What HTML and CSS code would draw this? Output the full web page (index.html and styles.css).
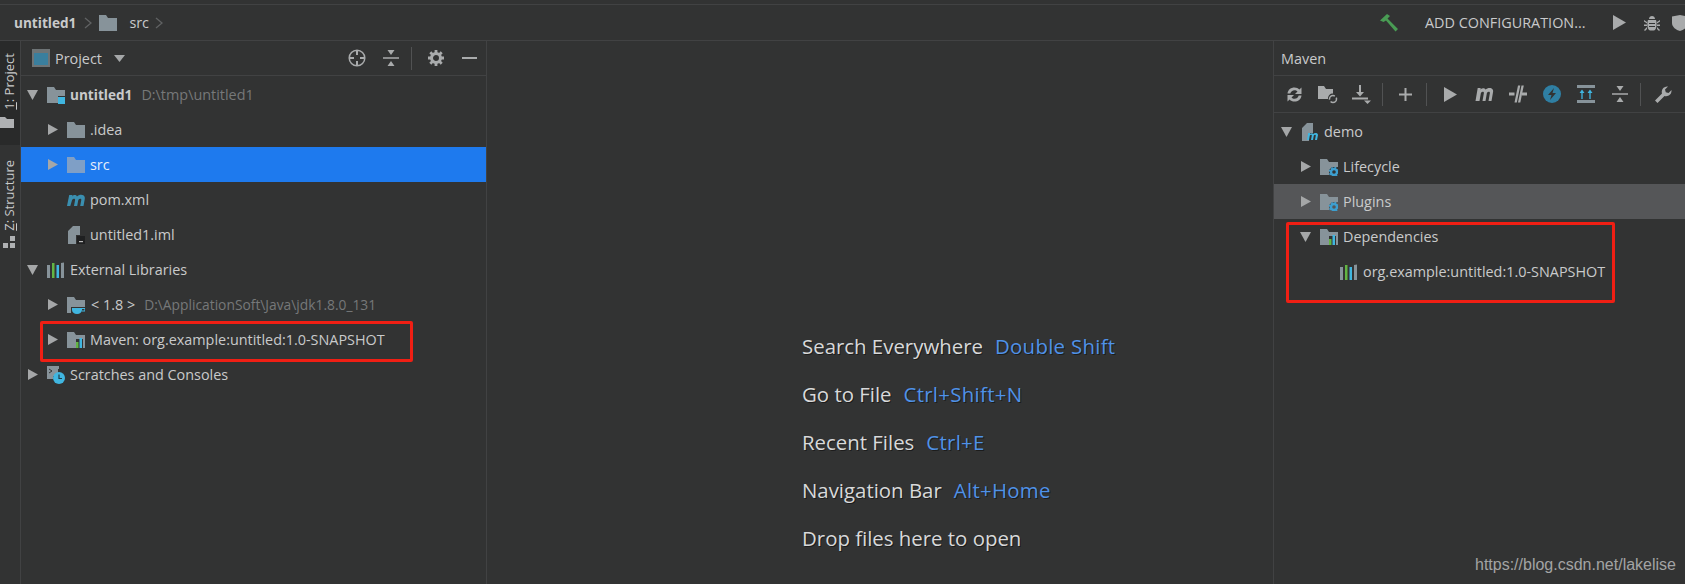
FILE: index.html
```html
<!DOCTYPE html>
<html lang="en">
<head>
    <meta charset="UTF-8">
    <title>untitled1 - IntelliJ IDEA</title>
    <link rel="stylesheet" href="styles.css">
</head>
<body>
    <svg class="defs" width="0" height="0">
        <symbol id="folder" viewBox="0 0 18 18"><path d="M0 1h7l2 3h9v13H0z" fill="#87939a"/></symbol>
        <symbol id="libs" viewBox="0 0 18 18"><path d="M0 4h3v13H0z" fill="#87939a"/><path d="M5 2h2.500v15H5z" fill="#62b543"/><path d="M9.500 4H12v13H9.500z" fill="#40b6e0"/><path d="M14 2l3-.5V17h-3z" fill="#87939a"/></symbol>
        <symbol id="folderlibs" viewBox="0 0 18 18"><path d="M0 1h7l2 3h9v4h-9v9H0z" fill="#87939a"/><path d="M9 11h2.500v6H9z" fill="#62b543"/><path d="M12.500 7H15v10h-2.500z" fill="#40b6e0"/><path d="M16 8h2v9h-2z" fill="#87939a"/></symbol>
        <symbol id="foldergear" viewBox="0 0 18 18"><path d="M0 1h7l2 3h9v5h-6l-3 3v5H0z" fill="#87939a"/><circle cx="14" cy="14" r="3" fill="none" stroke="#3d9fd0" stroke-width="2.400"/><circle cx="14" cy="14" r="4.500" fill="none" stroke="#3d9fd0" stroke-width="1.600" stroke-dasharray="1.800 1.730"/></symbol>
        <symbol id="triright" viewBox="0 0 11 11"><path d="M1 0l10 5.500L1 11z" fill="#a5a7a8"/></symbol>
        <symbol id="tridown" viewBox="0 0 11 11"><path d="M0 1h11L5.500 11z" fill="#a5a7a8"/></symbol>
        <symbol id="collapse" viewBox="0 0 16 16"><path d="M0 7.200h16v1.600H0zM4.500 0h7L8 5zM4.500 16h7L8 11z" fill="#a9abac"/></symbol>
        <symbol id="play" viewBox="0 0 13 15"><path d="M0 0l13 7.500L0 15z" fill="#a9abac"/></symbol>
    </svg>

    <div class="navbar">
        <div class="crumbs">
            <b>untitled1</b>
            <svg class="chev" width="8" height="12" viewBox="0 0 8 12"><path d="M1 1l6 5-6 5" fill="none" stroke="#606263" stroke-width="1.300"/></svg>
            <svg class="ico" width="18" height="18"><use href="#folder"/></svg>
            <span>src</span>
            <svg class="chev" width="8" height="12" viewBox="0 0 8 12"><path d="M1 1l6 5-6 5" fill="none" stroke="#606263" stroke-width="1.300"/></svg>
        </div>
        <div class="runbar">
            <svg class="hammer" width="20" height="18" viewBox="0 0 20 18"><path d="M0 6.500L7 0l3 2-2.500 2.500L18 15l-2.500 2.500L6 6.500 3.500 8z" fill="#499c54"/></svg>
            <span class="config">ADD CONFIGURATION...</span>
            <svg width="13" height="15"><use href="#play"/></svg>
            <svg class="bug" width="16" height="16" viewBox="0 0 16 16"><path d="M5 4c0-4 6-4 6 0zM4 5h8c1 2 1 8-1 10-1 .7-5 .7-6 0C3 13 3 7 4 5zM0 5l3 2v1.500L0 6.500zM16 5l-3 2v1.500l3-2zM0 9.500h3V11H0zM13 9.500h3V11h-3zM0 15l3-3v2l-2 2zM16 15l-3-3v2l2 2z" fill="#a9abac"/><path d="M5 8.500h6M5 11.500h6" stroke="#323333" stroke-width="1.200"/></svg>
            <svg class="shield" width="16" height="16" viewBox="0 0 16 16"><path d="M0 1.500L8 0l8 1.500V8c0 4-4 7-8 8-4-1-8-4-8-8z" fill="#a9abac"/></svg>
        </div>
    </div>

    <div class="workspace">
        <div class="stripe">
            <div class="stripe-tab active">
                <span class="vtext"><u>1</u>: Project</span>
                <svg class="stripe-folder" width="14" height="11" viewBox="0 0 14 11"><path d="M0 0h5l2 2h7v9H0z" fill="#afb1b3"/></svg>
            </div>
            <div class="stripe-tab">
                <span class="vtext"><u>Z</u>: Structure</span>
                <svg class="stripe-struct" width="14" height="14" viewBox="0 0 14 14"><path d="M8 1h5v5H8zM1 8h5v5H1zM8 8h5v5H8z" fill="#afb1b3"/></svg>
            </div>
        </div>

        <section class="project">
            <div class="tool-head">
                <svg class="ico" width="18" height="18" viewBox="0 0 18 18"><path d="M0 0h18v18H0z" fill="#6e7476"/><path d="M2 4h14v12H2z" fill="#3a7f9e"/></svg>
                <span class="head-title">Project</span>
                <svg class="dropdown" width="11" height="7" viewBox="0 0 11 7"><path d="M0 0h11L5.500 7z" fill="#a5a7a8"/></svg>
                <div class="head-actions">
                    <svg class="act-first" width="18" height="18" viewBox="0 0 18 18"><circle cx="9" cy="9" r="7.800" fill="none" stroke="#a9abac" stroke-width="1.500"/><path d="M9 1v5M9 12v5M1 9h5M12 9h5" stroke="#a9abac" stroke-width="2"/></svg>
                    <svg class="act-second" width="16" height="16"><use href="#collapse"/></svg>
                    <i class="sep head-sep"></i>
                    <svg class="act-gear" width="16" height="16" viewBox="0 0 16 16"><circle cx="8" cy="8" r="4.500" fill="none" stroke="#a9abac" stroke-width="3"/><path d="M8 0v3M8 13v3M0 8h3M13 8h3M2.300 2.300l2.100 2.100M11.600 11.600l2.100 2.100M2.300 13.700l2.100-2.100M11.600 4.400l2.100-2.100" stroke="#a9abac" stroke-width="2.800"/></svg>
                    <svg class="act-min" width="15" height="2"><path d="M0 0h15v2H0z" fill="#a9abac"/></svg>
                </div>
            </div>
            <div class="tree">
                <div class="row lvl0">
                    <svg class="arrow" width="11" height="11"><use href="#tridown"/></svg>
                    <svg class="ico" width="18" height="18" viewBox="0 0 18 18"><path d="M0 1h7l2 3h9v6h-7v7H0z" fill="#87939a"/><path d="M11 11h7v7h-7z" fill="#40b6e0"/></svg>
                    <b>untitled1</b><span class="path first-path">D:\tmp\untitled1</span>
                </div>
                <div class="row lvl1">
                    <svg class="arrow" width="11" height="11"><use href="#triright"/></svg>
                    <svg class="ico" width="18" height="18"><use href="#folder"/></svg>
                    <span>.idea</span>
                </div>
                <div class="row lvl1 selected">
                    <svg class="arrow" width="11" height="11"><use href="#triright"/></svg>
                    <svg class="ico" width="18" height="18" viewBox="0 0 18 18"><path d="M0 1h7l2 3h9v13H0z" fill="#7f9fc6"/></svg>
                    <span>src</span>
                </div>
                <div class="row lvl1 leaf">
                    <svg class="ico" width="18" height="18" viewBox="0 0 18 18"><path d="M0 15L2.200 4h3.300l-.3 1.500C6.500 3.800 9 3.500 10 5.500 12 3.300 16.800 3 17.700 6c.3 1 .1 2-.1 3l-1.100 6h-3.300l1.100-6c.2-1.300-2-1.700-3 0L10.200 15H7l1.100-6c.2-1.300-2-1.700-3 0L3.300 15z" fill="#3a8fb0"/></svg>
                    <span>pom.xml</span>
                </div>
                <div class="row lvl1 leaf">
                    <svg class="ico" width="18" height="18" viewBox="0 0 18 18"><path d="M6 0h7v9H9v9H1V5z" fill="#87939a"/><path d="M10 10h8v8h-8z" fill="#1f2021"/><path d="M12 15h4v1.200h-4z" fill="#bbbbbb"/></svg>
                    <span>untitled1.iml</span>
                </div>
                <div class="row lvl0">
                    <svg class="arrow" width="11" height="11"><use href="#tridown"/></svg>
                    <svg class="ico" width="18" height="18"><use href="#libs"/></svg>
                    <span>External Libraries</span>
                </div>
                <div class="row lvl1">
                    <svg class="arrow" width="11" height="11"><use href="#triright"/></svg>
                    <svg class="ico" width="18" height="18" viewBox="0 0 18 18"><path d="M0 1h7l2 3h9v7H4v6H0z" fill="#87939a"/><path d="M5 12h10v2c0 2-2 4-5 4s-5-2-5-4z" fill="#40b6e0"/><path d="M15 12.500h3v2.500h-3" fill="none" stroke="#40b6e0" stroke-width="1.200"/></svg>
                    <span class="jdk">&lt; 1.8 &gt;</span><span class="path jdk-path">D:\ApplicationSoft\Java\jdk1.8.0_131</span>
                </div>
                <div class="row lvl1">
                    <svg class="arrow" width="11" height="11"><use href="#triright"/></svg>
                    <svg class="ico" width="18" height="18"><use href="#folderlibs"/></svg>
                    <span>Maven: org.example:untitled:1.0-SNAPSHOT</span>
                </div>
                <div class="row lvl0">
                    <svg class="arrow" width="11" height="11"><use href="#triright"/></svg>
                    <svg class="ico" width="18" height="18" viewBox="0 0 18 18"><path d="M0 0h12v3h-1v7H6v3H0z" fill="#87939a"/><path d="M2 3l3 2-3 2" fill="none" stroke="#323333" stroke-width="1"/><circle cx="12" cy="12" r="6" fill="#40b6e0"/><path d="M12 8.500V12.500h3" fill="none" stroke="#1f3b48" stroke-width="1.200"/></svg>
                    <span>Scratches and Consoles</span>
                </div>
            </div>
            <div class="mark mark-left"></div>
        </section>

        <main class="editor">
            <p>Search Everywhere<span class="key">Double Shift</span></p>
            <p>Go to File<span class="key">Ctrl+Shift+N</span></p>
            <p>Recent Files<span class="key">Ctrl+E</span></p>
            <p>Navigation Bar<span class="key">Alt+Home</span></p>
            <p>Drop files here to open</p>
        </main>

        <section class="maven">
            <div class="tool-head maven-head"><span>Maven</span></div>
            <div class="maven-tools">
                <span class="btn"><svg width="17" height="17" viewBox="0 0 17 17"><path d="M1.500 7.500C2 3.500 5 1.500 8.500 1.500c2 0 3.700.8 4.900 2.100L15.500 1.500V8h-6.500l2.500-2.500C10.700 4.700 9.700 4.200 8.500 4.200 6.500 4.200 4.800 5.500 4.300 7.500zM15.500 9.500C15 13.500 12 15.500 8.500 15.500c-2 0-3.700-.8-4.900-2.100L1.500 15.500V9h6.500l-2.500 2.500c.8.800 1.800 1.300 3 1.300 2 0 3.700-1.300 4.200-3.300z" fill="#a9abac"/></svg></span>
                <span class="btn"><svg width="20" height="19" viewBox="0 0 20 19"><path d="M0 1h6l2 3h7v4.500c-3 0-5 2-5 5.500H0z" fill="#a9abac"/><circle cx="15" cy="14" r="3.500" fill="none" stroke="#a9abac" stroke-width="1.500" stroke-dasharray="8 2"/></svg></span>
                <span class="btn"><svg width="20" height="19" viewBox="0 0 20 19"><path d="M7 0h2v7h3l-4 4.500L4 7h3zM0 12.500h16v2H0z" fill="#a9abac"/><path d="M12 15.500h7L15.500 19z" fill="#a9abac"/></svg></span>
                <i class="sep"></i>
                <span class="btn"><svg width="13" height="13" viewBox="0 0 13 13"><path d="M5.500 0h2v5.500H13v2H7.500V13h-2V7.500H0v-2h5.500z" fill="#a9abac"/></svg></span>
                <i class="sep sep-run"></i>
                <span class="btn"><svg width="13" height="15"><use href="#play"/></svg></span>
                <span class="btn"><svg width="19" height="15" viewBox="0 0 18 15"><path d="M0 14L2.200 1h3l-.3 1.500C6.500 1 9 .7 10 2.500 12 .5 16.500.2 17.500 3c.3 1 .1 2-.1 3l-1.400 8h-3l1.400-8c.2-1.300-2-1.700-3 0L10 14H7l1.400-8c.2-1.300-2-1.700-3 0L4 14z" fill="#a9abac"/></svg></span>
                <span class="btn"><svg width="18" height="18" viewBox="0 0 18 18"><path d="M0 7.500h5.500v3H0zM13 7.500h5v3h-5z" fill="#a9abac"/><path d="M5.500 17.500L9 .5h2.300L7.800 17.500zM9 17.500L12.500 .5h2.300l-3.500 17z" fill="#a9abac"/></svg></span>
                <span class="btn"><svg width="18" height="18" viewBox="0 0 18 18"><circle cx="9" cy="9" r="9" fill="#2f7fa3"/><path d="M11 3L5 10h3.500L7 15l6-7H9.500z" fill="#323333"/></svg></span>
                <span class="btn"><svg width="18" height="18" viewBox="0 0 18 18"><path d="M0 0h18v3H0zM0 15h18v3H0z" fill="#87939a"/><path d="M5 14V7M13 14V7" stroke="#40b6e0" stroke-width="1.300"/><path d="M2.500 8L5 4.500 7.500 8zM10.500 8L13 4.500 15.500 8z" fill="#40b6e0"/></svg></span>
                <span class="btn"><svg width="16" height="16"><use href="#collapse"/></svg></span>
                <i class="sep"></i>
                <span class="btn"><svg width="17" height="17" viewBox="0 0 17 17"><path d="M0 14.500L7 7.500C6 4 8.500 0 13 .5L10 3.500l.8 2.700 2.700.8 3-3c.5 4.500-3.500 7-7 6L2.500 17z" fill="#a9abac"/></svg></span>
            </div>
            <div class="tree">
                <div class="row lvl0">
                    <svg class="arrow" width="11" height="11"><use href="#tridown"/></svg>
                    <svg class="ico" width="18" height="18" viewBox="0 0 18 18"><path d="M6 0h6v10H8v8H1V5z" fill="#87939a"/><path d="M6 17l1.200-7h2l-.2 1c1-1 2.500-1.200 3.200 0 1.300-1.200 4.500-1.500 4.800 1L16 17h-2l.8-4.500c.2-.8-1.300-1-2 0L12 17h-2l.8-4.500c.2-.8-1.300-1-2 0L8 17z" fill="#40b6e0"/></svg>
                    <span>demo</span>
                </div>
                <div class="row lvl1">
                    <svg class="arrow" width="11" height="11"><use href="#triright"/></svg>
                    <svg class="ico" width="18" height="18"><use href="#foldergear"/></svg>
                    <span>Lifecycle</span>
                </div>
                <div class="row lvl1 hovered">
                    <svg class="arrow" width="11" height="11"><use href="#triright"/></svg>
                    <svg class="ico" width="18" height="18"><use href="#foldergear"/></svg>
                    <span>Plugins</span>
                </div>
                <div class="row lvl1">
                    <svg class="arrow" width="11" height="11"><use href="#tridown"/></svg>
                    <svg class="ico" width="18" height="18"><use href="#folderlibs"/></svg>
                    <span>Dependencies</span>
                </div>
                <div class="row lvl1 leaf">
                    <svg class="ico" width="18" height="18"><use href="#libs"/></svg>
                    <span>org.example:untitled:1.0-SNAPSHOT</span>
                </div>
            </div>
            <div class="mark mark-right"></div>
        </section>
    </div>

    <div class="watermark">https://blog.csdn.net/lakelise</div>
</body>
</html>
```

FILE: styles.css
```css
* {
    margin: 0;
    padding: 0;
    box-sizing: border-box;
}

html, body {
    height: 100%;
    overflow: hidden;
}

body {
    background-color: #323333;
    color: #c9cacb;
    font-family: 'Open Sans', 'Noto Sans', sans-serif;
    font-size: 14.4px;
    position: relative;
    display: flex;
    flex-direction: column;
}

b {
    font-size: 13.6px;
}

.defs {
    position: absolute;
}

svg {
    flex: none;
    display: block;
}

.navbar {
    height: 37px;
    margin-top: 4px;
    border-top: 1px solid #414243;
    border-bottom: 1px solid #414243;
    display: flex;
    align-items: center;
    justify-content: space-between;
    flex: none;
}

.crumbs {
    display: flex;
    align-items: center;
    padding-left: 14px;
}

.crumbs .chev:nth-of-type(1) {
    margin: 0 7px 0 8px;
}

.crumbs span {
    margin: 0 6px 0 7px;
}

.runbar {
    display: flex;
    align-items: center;
    width: 305px;
}

.config {
    margin: 0 28px 0 25px;
    width: 160px;
    white-space: nowrap;
}

.bug {
    margin-left: 18px;
}

.shield {
    margin-left: 12px;
}

.workspace {
    flex: 1;
    display: flex;
    min-height: 0;
}

.stripe {
    width: 21px;
    border-right: 1px solid #414243;
    flex: none;
}

.stripe-tab {
    height: 104px;
    padding-top: 12px;
    display: flex;
    flex-direction: column;
    align-items: center;
    overflow: hidden;
}

.stripe-tab.active {
    background: #292a2a;
    margin-bottom: 2px;
}

.stripe-tab + .stripe-tab {
    padding-top: 13px;
    height: 120px;
}

.vtext {
    writing-mode: vertical-rl;
    transform: rotate(180deg);
    font-size: 13px;
    line-height: 20px;
    margin-right: 3px;
    white-space: nowrap;
}

.stripe-folder {
    margin: 7px 6px 0 0;
}

.stripe-struct {
    margin: 4px 3px 0 0;
}

.project {
    width: 466px;
    border-right: 1px solid #414243;
    position: relative;
    flex: none;
}

.tool-head {
    height: 35px;
    border-bottom: 1px solid #414243;
    display: flex;
    align-items: center;
    padding-left: 11px;
}

.dropdown {
    margin-left: 12px;
}

.head-actions {
    margin-left: auto;
    display: flex;
    align-items: center;
}

.act-second {
    margin-left: 17px;
}

.head-sep {
    height: 24px;
    margin: 0 16px 0 12px;
}

.act-min {
    margin: 0 9px 0 18px;
}

.sep {
    display: block;
    width: 1px;
    height: 23px;
    background: #515253;
    flex: none;
}

.tree {
    padding-top: 1px;
}

.row {
    height: 35px;
    display: flex;
    align-items: center;
    white-space: nowrap;
}

.lvl0 {
    padding-left: 6px;
}

.lvl1 {
    padding-left: 26px;
}

.arrow {
    margin-right: 9px;
}

.project .leaf {
    padding-left: 46px;
}

.ico {
    margin-right: 5px;
}

.selected {
    background: #1e7aee;
    color: #e6eefb;
}

.hovered {
    background: #555658;
}

.path {
    color: #767879;
}

.first-path {
    margin-left: 9px;
}

.jdk {
    margin-left: 1px;
}

.jdk-path {
    margin-left: 9px;
    font-size: 13.8px;
}

.editor {
    flex: 1;
    padding: 281px 0 0 315px;
    font-size: 20.4px;
    color: #d8d9da;
    text-shadow: 1px 1px 0 rgba(0, 0, 0, 0.45);
}

.editor p {
    height: 48px;
    line-height: 48px;
    white-space: nowrap;
}

.key {
    color: #4f92e8;
    margin-left: 12px;
    letter-spacing: 0.3px;
}

.maven {
    width: 412px;
    border-left: 1px solid #414243;
    position: relative;
    flex: none;
}

.maven-head {
    padding-left: 7px;
}

.maven-tools {
    height: 37px;
    border-bottom: 1px solid #414243;
    display: flex;
    align-items: center;
    padding-left: 3px;
}

.btn {
    width: 34px;
    display: flex;
    justify-content: center;
    flex: none;
}

.maven-tools .sep {
    margin: 0 5px 0 3px;
}

.maven-tools .sep-run {
    margin: 0 6px 0 4px;
}

.maven .lvl0 {
    padding-left: 7px;
}

.maven .lvl1 {
    padding-left: 26px;
}

.maven .leaf {
    padding-left: 66px;
}

.mark {
    position: absolute;
    border: 3px solid #f01f14;
    border-radius: 2px;
}

.mark-left {
    left: 19px;
    top: 280px;
    width: 373px;
    height: 41px;
}

.mark-right {
    left: 12px;
    top: 181px;
    width: 329px;
    height: 81px;
}

.watermark {
    position: absolute;
    right: 9px;
    bottom: 10px;
    font-family: 'Liberation Sans', sans-serif;
    font-size: 16px;
    color: #a3a4a4;
}
```
